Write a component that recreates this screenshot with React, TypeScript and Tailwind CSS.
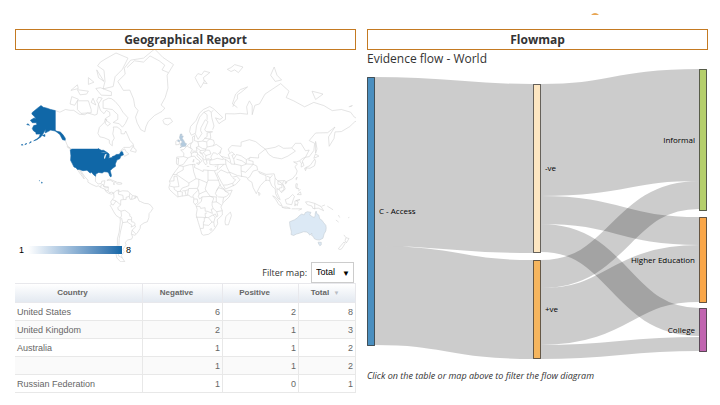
import { useState } from "react";

const MAP_WIDTH = 341;
const MAP_HEIGHT = 212;
const DEGREE = 0.92;

// Mercator, "lon,lat lon,lat ..." to svg points
const project = (coords: string): string =>
  coords
    .split(" ")
    .map(pair => {
      const [lon, lat] = pair.split(",").map(Number);
      const x = 170 + lon * DEGREE;
      const y = 151 - ((DEGREE * 180) / Math.PI) * Math.log(Math.tan(Math.PI / 4 + (lat * Math.PI) / 360));
      return `${x.toFixed(1)},${y.toFixed(1)}`;
    })
    .join(" ");

const UNITED_STATES = [
  "-141,60.3 -141,69.6 -146,70 -150,70.5 -154,70.8 -156.5,71.4 -160,70.6 -163,69.7 -166,68.9 -166.5,68.3 -163.5,67.1 -161.8,66.2 -164,66.6 -168,65.6 -166,64.5 -161.5,64.5 -161,63.5 -164.5,63.1 -166,61.6 -164.8,60.5 -162,59.5 -162,58.6 -158.5,58.6 -157.3,58.6 -158.5,57 -161,55.8 -164.5,54.6 -161,55.3 -156.5,57.1 -153.8,59.2 -151.5,61.2 -152,59.3 -149,60 -146,60.8 -141,60.3",
  "-141,60.3 -138,59.2 -136,58.3 -133,55.3 -130.2,55 -130.2,56.2 -133,58.5 -135.5,59.7 -138,60 -141,60.5",
  "-167,53.9 -169,53 -168,54",
  "-172,52.7 -174,52.1 -173,52.8",
  "-178,51.9 -176,51.8 -177,52.2",
  "-172,63.6 -169,63.3 -171,64",
  "-155,57.8 -152.3,57.2 -152.3,58.4",
  "-124.7,48.4 -123,49 -95,49 -94.5,49.4 -91,48.2 -88.5,48.2 -84.7,46.6 -82.5,45.4 -82.4,43 -83.1,42 -79,42.8 -79,43.4 -76.5,44 -74.7,45 -71.3,45.2 -70,46.8 -69,47.4 -67.8,47 -67,44.8 -70,43.6 -70.7,41.8 -74,40.6 -75.8,37.2 -75.5,35.3 -79,33.3 -81.3,31.3 -80,27 -80.4,25.2 -81.6,26 -82.7,28.5 -84,30 -88,30.3 -90,29.1 -93.8,29.7 -97,28 -97.2,25.9 -99.5,27.5 -101.5,29.8 -103.2,29 -106.5,31.7 -111,31.3 -114.8,32.5 -117.1,32.5 -118.5,34 -120.6,34.6 -122.5,37.6 -124.3,40.4 -124,44",
  "-156,20.1 -155,19.5 -155.8,19 -156,19.8",
  "-158.3,21.6 -157.7,21.3 -158,21.3",
];

const LAKES = [
  "-88,41.8 -87,41.7 -86.3,43 -85,45.6 -87,45.2 -88,43",
  "-92,46.7 -88.5,47 -85,46.6",
];

const UNITED_KINGDOM = [
  "-5.5,50 -3,50.7 1.3,51.1 0.8,51.6 1.7,52.7 0.2,53 -1.5,55 -3,56 -1.9,57.5 -4,57.7 -3.1,58.6 -5,58.6 -6,56.6 -4.8,54.8 -3,54.1 -3.2,53.4 -4.6,53.2 -4.3,52.2 -5.2,51.8 -3,51.4",
  "-7.8,54.2 -6,54.1 -5.6,54.7 -6.5,55.2 -8,54.7",
];

const AUSTRALIA = [
  "113.7,-22 114,-26 115.7,-31.8 115.2,-34.2 118,-35.1 121,-33.8 124,-33.1 129,-31.6 132,-31.9 134,-32.8 135.6,-34.8 137.8,-33 137.7,-35.2 139.5,-36 140.7,-38 143.5,-38.8 146.3,-39 149.9,-37.5 151.3,-33.5 153,-31 153.5,-28 153,-25.5 150.8,-23 149,-20.6 146.4,-19 145.4,-15 143.5,-14 142.5,-10.9 141.6,-13 141.4,-16 140.5,-17.6 138.5,-16.8 135.5,-15 136.9,-12.2 133,-11.5 130.8,-12.5 129.5,-15 127,-14 124.5,-15.6 122.2,-18 119,-20",
  "144.7,-40.8 148.2,-40.9 148,-43 146.5,-43.6 145.3,-42.3",
];

const COASTS = [
  // north america
  "-141,69.6 -136,69 -130,70 -125,69.7 -121,69.7 -115,68.2 -109,68 -106,68.7 -98,67.8 -95.5,68.2 -94,71.9 -92,69.7 -88,68.4 -85.5,69.7 -82,69 -81.5,67.6 -86.5,66.4 -87.5,64.7 -93,62.2 -94.7,59 -92.5,57 -88,56.5 -82.3,55.1 -82.2,53 -79,51.3 -79,54 -76.8,56.2 -78.5,58.7 -77.5,61.5 -78,62.4 -73.8,62.4 -69.6,60.9 -69.5,58.8 -66,58.7 -64.5,60.3 -61.5,57 -60,55 -56,52.3 -60,50.2 -66.5,50.2 -71,47 -65.5,49.2 -64.5,47.5 -61,45.4 -65.8,43.6 -67,45",
  "-124,49 -127.5,51 -130.2,55 -130.2,56.2 -133,58.5 -135.5,59.7 -141,60.3",
  "-128.2,50.8 -125,50 -123.5,48.4 -126,49.3 -128.2,50.8",
  "-59.3,47.7 -56,51.6 -55.5,49.9 -53,48.5 -53.5,46.7 -59.3,47.7",
  "-117.1,32.5 -114.8,29.5 -112,26 -109.5,23.2 -111,26.5 -114.8,31.7 -113,31 -109.4,26 -105.5,22 -105.5,20 -102,18 -96.5,15.7 -94,16.2 -90,13.8 -87.5,13 -85.7,10 -83,8.3 -80,7.4 -77.5,8.6 -79.6,9.6 -82,9 -83.6,11 -83.3,15 -88.5,15.8 -87,21.5 -90.4,21 -91,18.7 -94.5,18.2 -97.4,21 -97.2,25.9",
  "-92,14.5 -91,17.2 -89,17.8 -88.5,15.8 -86,14 -83.3,15",
  "-87.5,13 -85.7,11.1 -83.6,11",
  "-84.9,21.9 -82,23.1 -77,21.2 -74.3,20.2 -77.5,19.9 -81,22 -84.9,21.9",
  "-74.4,18.4 -73,19.9 -69,19.3 -68.6,18.2 -71.5,17.9 -74.4,18.4",
  "-78.3,18.3 -76.3,18.1 -78.3,18.3",
  // arctic islands
  "-80,73.7 -76,72.8 -71,71 -67.5,69 -62,66.7 -65,64 -68,62.3 -71.5,64 -78,64.6 -73,66 -73,68 -79,70 -89,70.5 -89,73 -83,73.8 -80,73.7",
  "-117,73 -105,73 -102,70 -102,68.8 -113,68.5 -117,70 -117,73",
  "-125,72 -123,74.3 -116,73.5 -120,71.5 -125,72",
  "-100,73.8 -97,71.6 -102,72.5 -100,73.8",
  "-94,74.1 -90,73.8 -94,72 -96,73 -94,74.1",
  "-92,76.7 -80,75.6 -80,74.6 -91,74.7 -97,76.5 -92,76.7",
  "-117,76.2 -105,75.8 -107,75 -114,74.8 -117,76.2",
  "-124,76 -117,77.4 -116,76.5 -124,76",
  "-88,80.4 -95,81.2 -92,81.8 -86,82.3 -75,83.1 -62,82.4 -68,80.6 -76,79.2 -78,77 -89,76.4 -87,78.2 -88,80.4",
  "-96,80.5 -88,78.2 -94,79 -96,80.5",
  "-105,79 -99,78 -105,77.5 -105,79",
  "-87,66 -81,64 -84,63 -87,64.2 -85,66 -87,66",
  // greenland, iceland
  "-73,78.2 -67,76 -60,76.1 -56,73.6 -54.5,71 -51,69.6 -53.8,67 -52,64.3 -48,61 -43.7,59.9 -42.5,62.5 -40,65 -33,67.7 -25,69.3 -22,70.5 -26,71.6 -21.5,74 -18.5,76.6 -19.5,79.5 -12.5,81.4 -24,82.5 -33,83.6 -45,82.4 -59,82.1 -66,80.8 -65,79.7 -73,78.2",
  "-63,80.9 -55,82 -45,81.8 -38,82.7 -28,82 -22,81.3 -25,80.5 -18,80",
  "-24,65.5 -22,66.4 -16,66.5 -13.6,65 -18.7,63.4 -22.5,63.9 -24,65.5",
  // south america
  "-77.5,8.6 -75.5,10.7 -72,12.1 -71.5,10 -68,11 -62,10.7 -60,8.4 -57,6 -52,4.8 -50,0 -48,-0.8 -44,-2.6 -40,-2.9 -37,-4.9 -34.9,-8 -37,-11.2 -39,-13.5 -39.2,-17.7 -41,-22 -44.6,-23.1 -48.5,-25.7 -48.7,-28.4 -52,-33 -54.5,-34.9 -58,-34 -57,-36.4 -58,-38.2 -62.3,-39 -65,-41 -64,-43 -67.5,-46.3 -66,-48 -69,-51 -68.3,-52.4 -65.5,-54.8 -70,-55 -74,-52.5 -75.5,-48 -73.5,-43 -73.5,-38 -71.5,-32 -70.3,-22 -70.4,-18.4 -75,-15.5 -77.5,-11.5 -80,-7 -81.3,-5 -80,-3.4 -80.8,-1 -79,1.5 -77.2,4 -77.5,8.6",
  "-79,1.5 -75,0 -70,-4.2 -69.8,1.2 -67,1.5 -67.5,6.2 -72.3,7.3 -72.5,11 -71.5,12",
  "-80,-3.4 -78,-4.5 -75,0",
  "-70,-4.2 -73,-7.3 -72.5,-9.5 -69.6,-11 -69,-16 -70.4,-18.4",
  "-69.6,-11 -65.3,-10 -60,-14 -60,-16.3 -58,-17.3 -58,-20 -58,-22 -55.7,-22.3 -54.3,-24 -54.6,-25.6 -53.7,-27 -57.6,-30.2 -53.4,-33.7",
  "-69,-18 -67.8,-22.8 -62.7,-22.2 -62,-19.7 -58,-20",
  "-67.8,-22.8 -70,-31 -71.5,-38 -72,-45 -72.5,-51 -68.3,-52.4",
  "-62.7,-22.2 -57.7,-25.3 -58.6,-27.3 -54.6,-25.6",
  "-57.6,-30.2 -58.4,-34",
  "-67,1.5 -64,1.6 -64,4 -60.5,5 -60,8.4",
  "-60.5,5 -59.8,1.8 -56.5,2 -52,4.8",
  "-57.3,5.8 -58,2",
  "-54,5.8 -54.5,2.3",
  // africa
  "-5.9,35.8 -9.8,31.5 -13,27.7 -17,21 -16.2,19 -17.5,14.7 -16.7,12.3 -13.2,8.9 -8,4.4 -4,5.2 1.2,6 4.4,6.4 6,4.3 9.5,4 9.5,0 9,-1.3 12,-5 13.3,-9 12.2,-15 14.5,-22.5 16.5,-28.6 18.3,-33.9 20,-34.8 25.7,-34 30,-31.2 32.8,-28 35.5,-24 35,-20 40.5,-15 40.5,-10.5 39,-6.5 41.5,-1.7 48,4.5 51.3,11.8 44,10.5 43,12.5 39,15.5 37.3,19.5 35.5,24 32.5,29.9 32.3,31.3 25,31.6 20,32 19.8,30.4 15.4,32.3 10.2,34.3 11,37 5,36.7 -2,35.1 -5.9,35.8",
  "-13,27.7 -8.7,27.6 -8.7,28.8 -2,32 -2,35.1",
  "-8.7,27.3 4.2,19.2 12,23.5 9.5,30.2 8.3,37",
  "-17,21 -12,21.3 -12,25.9 -8.7,26 -6.5,15.5 -12,15 -16.5,16",
  "12,23.5 15,23 24,19.5 25,22 25,31.6",
  "25,22 37,22",
  "-8,10.2 -11.5,12.4 -12,15",
  "-5.5,10.4 -3,14 0.3,15 4.2,16.5 4.2,19.2",
  "-7.5,4.5 -8,10.2 -5.5,10.4 -2.8,9.6 -3,5.2",
  "-2.8,11 0,11 2.4,11.9 3.6,11.8 2.7,6.4",
  "1.2,6 0,11",
  "3.6,11.8 4,13.5 13.5,13.6 15,17 15,23",
  "13.5,13.6 14,11.5 9,6.5 8.5,4.7",
  "24,19.5 22,13 23,10.9 15.3,7.5 14.5,12.5",
  "23,10.9 27.5,5 34,4.3 35,5 33,8 34.2,11 36.5,15 38.4,18",
  "15.3,7.5 14.5,4.8 16,2.2 18.5,4.5 27.5,5 30.9,3.7 31,2.2 29.6,-1.3 29.3,-4.5 30.7,-8.3 28.5,-9 29.8,-13.4 24,-11 22,-11 21.8,-7.3 17,-8 16.2,-5.9 12.3,-5.8",
  "18.5,4.5 17.7,-0.5 13,-4.6",
  "9.8,2.2 13.3,2.2 14,-1.5 11,-4",
  "34.2,11 36.5,14.3 42.4,12.5 43,11 48,8 45,5 42,4 36,4.4",
  "42,4 41,-1.7",
  "34,4.3 34,-1 37.7,-3 39.2,-4.7",
  "34,-1 29.6,-1.3",
  "30.7,-8.3 34.5,-11.5 40.5,-10.5",
  "34.5,-11.5 35.8,-16 34.5,-17 33,-14 30.2,-15 25.3,-17.8 23.3,-17.6 22,-16.2 22,-13 24,-13",
  "11.8,-17.3 18.5,-17.4 23.3,-17.6 21,-18.3 21,-22 20,-22 20,-28.4 16.5,-28.6",
  "20,-25 23,-25.3 25.7,-25.6 29.4,-22.2 25.3,-17.8",
  "29.4,-22.2 31.3,-22.4 32.9,-17 30.2,-15",
  "31.3,-22.4 32,-26.8 32.8,-27",
  "27,-29.6 28.7,-28.6 29.4,-29.6 28,-30.6 27,-29.6",
  "49.3,-12 50.4,-15.7 47.2,-25 44,-25 43.5,-22 44.5,-16.5 49.3,-12",
  // europe
  "-9,43 -1.5,43.4 -1.2,46 -4.7,48.4 -1.5,48.7 1.7,50.9 4.5,52.5 8.5,53.8 8.2,57 10.5,57.7 10,54.8 14,54 19,54.4 21.2,56 24,57.2 24,59.3 30,59.9 23,60 21.4,61 25,65 22,65.8 17.3,62 17,60.5 18.5,59 14.2,55.5 11,59 7,58 5,60 6,62.6 12,65.5 15.5,68.5 20,70 27,71.1 31,70.3 41,66.8 38,66 33,66.7 37,64 40,65 44,66 44,68.4 54,68.3 60,68.5 68,68.2 67,71 70,73 73,71.4 73,68 76,71.5 81,72 87,75 104,77.7 113,75.8 110,74 118,73 130,71 140,72.5 151,71.4 160,69.6 170,70 180,69",
  "-9,43 -9.4,38.8 -8.9,37 -5.6,36 -2,36.8 0,39 3.2,42.3 7,43.5 10.3,43.8 12.3,41.7 15.8,40 16,38 18.4,40 13,44 13.6,45.6 19.4,42 20,39.5 22.5,36.5 24,38 23,40.5 26,40.8 29,41.2 28,43 30.8,46.4 33.5,46 35,45 39,47.2 37.5,45 41.5,42 41,41 35,42 31,41 27,40.4 27,37 30.5,36.6 36,36.8 35,32 32.3,31.3",
  "-7,41.9 -7.4,37.2",
  "-8.8,42 -6.5,41.8",
  "-1.5,43.4 3.2,42.3",
  "7,43.5 7,46 6,46.3 8,49 2.5,51",
  "7,46 10.4,46.8 13.5,46.5 13.6,45.6",
  "8,47.6 13,47.5 12.3,50.2 15,51 14,54",
  "6.2,49.5 6,51.8 7.1,53.3",
  "15,51 18.8,49.5 22.6,49.1 24,50.5 23.6,53.9 19,54.4",
  "12.3,50.2 15,48.9 17,48 22.2,48.4 22.6,49.1",
  "17,48 16,46.8 18.8,45.9 22.9,48",
  "22.2,48.4 26.6,48.2 28.2,45.5 22.7,44.2 20.3,46.1",
  "22.7,44.2 22.4,42.3 23,41.3 26.5,41.8",
  "19,42 21,40.9 23,41.3",
  "16,46.5 19,45 20.3,42.8",
  "24,50.5 30.6,51.3 34,52.3 40,49.6 38.2,47.1",
  "23.6,53.9 26.6,55.7 31,55 32,53 30.6,51.3",
  "21,56.2 26.6,55.7 28,56.2 27.4,59.4",
  "30,61 31.5,62.9 29,66.9 28.5,69 31,69.8",
  "11.4,59 12.5,63 16,67 20.5,69 24,68 24,65.8",
  "20.5,69 25.8,69.7 28.5,69",
  "-10,52 -6.3,52.2 -6,54 -8,55.3 -10,54 -10,52",
  "8.5,39 9.6,41.2 9.5,39.1 8.5,39",
  "12.5,38 15.6,38.2 15,36.7 12.5,38",
  "23.7,35.3 26.3,35.1",
  "32.4,35 34.5,35.6",
  // svalbard, arctic russia
  "11,79 14,79.8 18,79.6 21,80.3 27,80 20,79 21,78.2 17,76.7 14,77.8 11,79",
  "21,78.5 24,77.7 20,77.8",
  "46,80.6 50,80.9 54,81.4 63,81 58,80 54,80.5 50,80.2 46,80.6",
  "52,71 54,72.6 57,73.6 57,74.8 61,75.5 68,76.9 60,76.2 55,75 53,73.4 51.5,72 57,70.7",
  "93,79.5 97,81 100,79.5 105,78.5 98,78.2 93,79.5",
  "138,75.8 146,75.3 150,75 142,73.4 138,75.8",
  "179,71 182,71.4 178,71",
  "180,69 184,67 189,66 184,64.7 179,62.6 170,60 163,59.8 162,56 156.7,51 156,57 163,62.4 155,59.4 142,59.2 135,54.7 141,53 140,48 135,43.3 131,42.9",
  "142,54.2 143.5,49.2 142,46 142,54.2",
  "145.5,43.8 141.7,45.4 140,42 145.5,43.8",
  "141,41.4 142,39.5 140.8,35.7 135.8,33.5 131,34 136,36 141,41.4",
  "130,33.5 131,31.3 132,33.5 130,33.5",
  // asia
  "131,42.9 127.5,39.7 129.4,36 126.3,34.5 126.5,37.7 124.6,40 121,39 118,39.1 122.3,37.2 119.5,35 122,31 121,28 117,23.6 110,20.5 108,21.6 106,19 109,13 105,9 102,12.5 100,13.3 100,9 103.5,1.4 101,3 98.5,8 98,13 94.5,16 92,21.5 90,22 87,21.5 82,16.5 80,13 77.5,8 74,14.5 72.7,20 69,22 67,25 57,26.7 51,29 48,30 50,26.7 51.5,25 56.3,26 59.8,22.4 55,17.5 44,12.8 39,21 35,28 35,29.6",
  "42,17 46,17.2 52,19 55,22.5 52,24",
  "52,19 52.5,16",
  "36,29.3 39,32 47,29 48,30",
  "36,32.4 42.4,37 44.5,37 45.8,34 48,30",
  "36,36.8 42.4,37",
  "44.5,37 44,41.2 41.5,41.5",
  "39.5,43.6 48.5,41.8",
  "44,41.2 48.8,38.4",
  "49,41 47,45 51,47 54,45 51,44.5 53,41 54,37 50,37.3 49,41",
  "54,37.3 61,36 61,31 61.6,25.2",
  "61,31 66,29.8 70,33.5 74,37 67,37.3 61,35.5",
  "53,41.5 56,45 61,44 66.7,41 66.5,37.4",
  "56,41.3 62,40 66.5,37.4",
  "66.7,41 71,42.8 80,42.3 80,45 87.4,49 83,51 77,54 70,55.3 61,53.8 61,51 51,51.5 47,49 48.5,46.5",
  "71,42.8 69,40.5 74,39.5 74,37 78,35.5 79,32 74,31 70,25 68,24",
  "79,31 88,27.8 97,28.3 98,24 101,21.3 108,21.6",
  "80.5,30 81,29 88,26.6 88,21.8",
  "89,26 92,25 92.3,21",
  "92.3,24 95,27",
  "98,24 97.5,18 99,13",
  "101,21 101,18 105,17.5 105.5,14.4 102.5,14 102.5,12.2",
  "101,21.3 104.5,19.5 107.5,15.5 107.5,12 104.6,10.4",
  "87.4,49 98,50.3 102,51.5 107,49.6 116,49.8 120,47.6 111.8,43.8 105,41.6 96,42.8 91,45.2 87.4,49",
  "116,49.8 120,53 126,53 131,47.8 135,48.4 131,42.9",
  "124.6,40 127.5,41.8 131,42.9",
  "126.7,37.8 128.3,38.6",
  "80,9.7 81.8,7.4 80.3,6 80,9.7",
  "109,20 111,19.8 109,18.3 109,20",
  "120.2,23 121.8,25.1 120.9,22",
  // islands
  "95.3,5.6 98.5,4 103.8,-2 105.8,-5.8 102,-4 98.7,1.5 95.3,5.6",
  "105.3,-6.7 110.5,-6.5 114.5,-8 108.5,-7.8 105.3,-6.7",
  "109,1.5 113,3.2 117,7 119,5 117.5,1 116,-4 110.3,-3 109,1.5",
  "119.5,0 125,1.5 120.5,0.4 123,-1 122,-5 120.3,-3 119.5,-5.5 119.5,0",
  "116,-8.5 120,-8.5 127,-8.5 123.5,-10.2",
  "120.3,16 120.7,18.5 122.2,18.3 121.5,14.2 124,12.8 120.6,13.9 120.3,16",
  "122,7 125.4,9.8 126.3,6.8 122,7",
  "123,10.8 125.5,12.4",
  "131,-1 134.2,-0.8 141,-2.6 147.8,-6 150.7,-10.5 145,-7.8 139,-8.1 138,-5.5 133,-4 131,-1",
  "141,-2.6 141,-9.1",
  "148.5,-5.8 152.2,-4.2",
  "154.7,-5.5 161,-9.5",
  "164,-20.2 167,-22.3",
  "166.7,-15 168.2,-17.7",
  "177.3,-18 178.6,-17.5",
  "172.7,-34.5 175,-37 178.3,-37.7 175.3,-41.5 174,-39.3 175,-37",
  "172.8,-40.6 174,-41.7 170.7,-45.8 168.5,-46.6 166.6,-46 172.8,-40.6",
];

interface IMapShapesProps {
  shapes: string[];
  className: string;
}

const MapShapes = ({ shapes, className }: IMapShapesProps) => (
  <g className={className} strokeWidth="0.6">
    {shapes.map(shape => (
      <polygon key={shape} points={project(shape)} />
    ))}
  </g>
);

const WorldMap = () => (
  <div className="relative">
    <svg viewBox={`0 0 ${MAP_WIDTH} ${MAP_HEIGHT}`} className="block w-full" role="img" aria-label="World map">
      <g className="fill-none stroke-[#d2d2d2]" strokeWidth="0.6">
        {COASTS.map(coast => (
          <polyline key={coast} points={project(coast)} />
        ))}
      </g>
      <MapShapes shapes={UNITED_STATES} className="fill-[#1067a7] stroke-[#1067a7]" />
      <MapShapes shapes={LAKES} className="fill-[#dce6ee] stroke-none" />
      <MapShapes shapes={UNITED_KINGDOM} className="fill-[#b3cbdf] stroke-[#b8c6d2]" />
      <MapShapes shapes={AUSTRALIA} className="fill-[#dce9f5] stroke-[#c4ccd4]" />
    </svg>
    <div className="absolute bottom-2 left-1 flex items-center gap-1 font-['Liberation_Sans',sans-serif] text-[9px] leading-2 text-black">
      <span>1</span>
      <span className="h-2 w-[94px] bg-linear-to-r from-white to-[#1067a7]" />
      <span>8</span>
    </div>
  </div>
);

const ROWS = [
  { country: "United States", negative: 6, positive: 2, total: 8 },
  { country: "United Kingdom", negative: 2, positive: 1, total: 3 },
  { country: "Australia", negative: 1, positive: 1, total: 2 },
  { country: "", negative: 1, positive: 1, total: 2 },
  { country: "Russian Federation", negative: 1, positive: 0, total: 1 },
];

const CountryTable = () => (
  <table className="w-full table-fixed border-collapse font-['Liberation_Sans',sans-serif] text-[9px] leading-3 text-[#666]">
    <colgroup>
      <col />
      <col className="w-[80px]" />
      <col className="w-[76px]" />
      <col className="w-[57px]" />
    </colgroup>
    <thead>
      <tr className="h-[19px] bg-linear-to-b from-white to-[#e2e8f0] text-[8px]">
        <th className="border border-l-0 border-[#e8e8ec] pr-3">Country</th>
        <th className="border border-[#e8e8ec] pr-3">Negative</th>
        <th className="border border-[#e8e8ec] pr-3">Positive</th>
        <th className="border border-[#e8e8ec] pr-1">
          Total <span className="ml-0.5 text-[6px] text-[#b8bcc4]">▼</span>
        </th>
      </tr>
    </thead>
    <tbody>
      {ROWS.map(row => (
        <tr key={row.country} className="h-[18px] even:bg-[#fafafa]">
          <td className="border border-l-0 border-[#e8e8e8] px-0.5">{row.country}</td>
          <td className="border border-[#e8e8e8] px-0.5 text-right">{row.negative}</td>
          <td className="border border-[#e8e8e8] px-0.5 text-right">{row.positive}</td>
          <td className="border border-[#e8e8e8] px-0.5 text-right">{row.total}</td>
        </tr>
      ))}
    </tbody>
  </table>
);

const NODE_WIDTH = 8;

const NODES = [
  { label: "C - Access", x: 0, y: 9, height: 268, fill: "#4a8fc0", labelX: 12, anchor: "start" },
  { label: "-ve", x: 166, y: 16, height: 168, fill: "#fde6c1", labelX: 178, anchor: "start" },
  { label: "+ve", x: 166, y: 192, height: 98, fill: "#f5b55e", labelX: 178, anchor: "start" },
  { label: "Informal", x: 332, y: 1, height: 141, fill: "#b5cf6b", labelX: 328, anchor: "end" },
  { label: "Higher Education", x: 332, y: 149, height: 85, fill: "#f9a648", labelX: 328, anchor: "end" },
  { label: "College", x: 332, y: 240, height: 43, fill: "#c165b0", labelX: 328, anchor: "end" },
] as const;

const LINKS = [
  { x: 8, from: 9, to: 16, size: 169 },
  { x: 8, from: 178, to: 192, size: 99 },
  { x: 174, from: 16, to: 1, size: 112 },
  { x: 174, from: 128, to: 149, size: 28 },
  { x: 174, from: 156, to: 240, size: 28 },
  { x: 174, from: 192, to: 113, size: 28 },
  { x: 174, from: 220, to: 177, size: 57 },
  { x: 174, from: 277, to: 269, size: 14 },
];

const FlowDiagram = () => (
  <svg viewBox="0 0 341 292" className="block w-full" role="img" aria-label="Evidence flow">
    <g className="fill-none stroke-black" strokeOpacity="0.2">
      {LINKS.map(({ x, from, to, size }) => {
        const start = from + size / 2;
        const end = to + size / 2;
        const mid = x + 79;
        return (
          <path
            key={`${x}-${from}`}
            d={`M${x},${start}C${mid},${start} ${mid},${end} ${x + 158},${end}`}
            strokeWidth={size}
          />
        );
      })}
    </g>
    {NODES.map(({ label, x, y, height, fill, labelX, anchor }) => (
      <g key={label}>
        <rect
          x={x + 0.5}
          y={y + 0.5}
          width={NODE_WIDTH - 1}
          height={height}
          fill={fill}
          className="stroke-black/60"
          strokeWidth="1"
        />
        <text x={labelX} y={y + height / 2 + 3} textAnchor={anchor} className="fill-black text-[8px]">
          {label}
        </text>
      </g>
    ))}
  </svg>
);

const PanelTitle = ({ children }: { children: string }) => (
  <h2 className="h-[21px] border border-[#c47a22] text-center text-xs leading-[19px] font-bold text-[#333]">
    {children}
  </h2>
);

const App = () => {
  const [filter, setFilter] = useState("Total");

  return (
    <main className="bg-white pr-3 pb-3 pl-[15px] font-['Open_Sans',sans-serif] text-[#333]">
      <header className="h-[29px] pt-3 pl-[83%]">
        <svg viewBox="0 0 10 3" className="h-[3px] w-[10px]" aria-hidden="true">
          <path d="M1 3Q5 -1 9 3Z" fill="#e8a552" />
        </svg>
      </header>

      <div className="grid grid-cols-2 gap-[11px]">
        <section>
          <PanelTitle>Geographical Report</PanelTitle>
          <WorldMap />
          <div className="flex items-center justify-end gap-1 pr-0.5">
            <label htmlFor="filter" className="text-[9px]">
              Filter map:
            </label>
            <div className="relative">
              <select
                id="filter"
                value={filter}
                onChange={e => setFilter(e.target.value)}
                className="block h-[21px] w-[43px] appearance-none border border-[#ccc] bg-white pl-1 font-['Liberation_Sans',sans-serif] text-[9px] text-black"
              >
                <option>Total</option>
                <option>Positive</option>
                <option>Negative</option>
              </select>
              <span className="pointer-events-none absolute top-0 right-1 text-[8px] leading-[21px] text-black">▼</span>
            </div>
          </div>
          <CountryTable />
        </section>

        <section>
          <PanelTitle>Flowmap</PanelTitle>
          <h3 className="text-xs leading-[18px]">Evidence flow - World</h3>
          <FlowDiagram />
          <p className="mt-2 text-[9px] leading-4 italic">Click on the table or map above to filter the flow diagram</p>
        </section>
      </div>
    </main>
  );
};

export default App;
